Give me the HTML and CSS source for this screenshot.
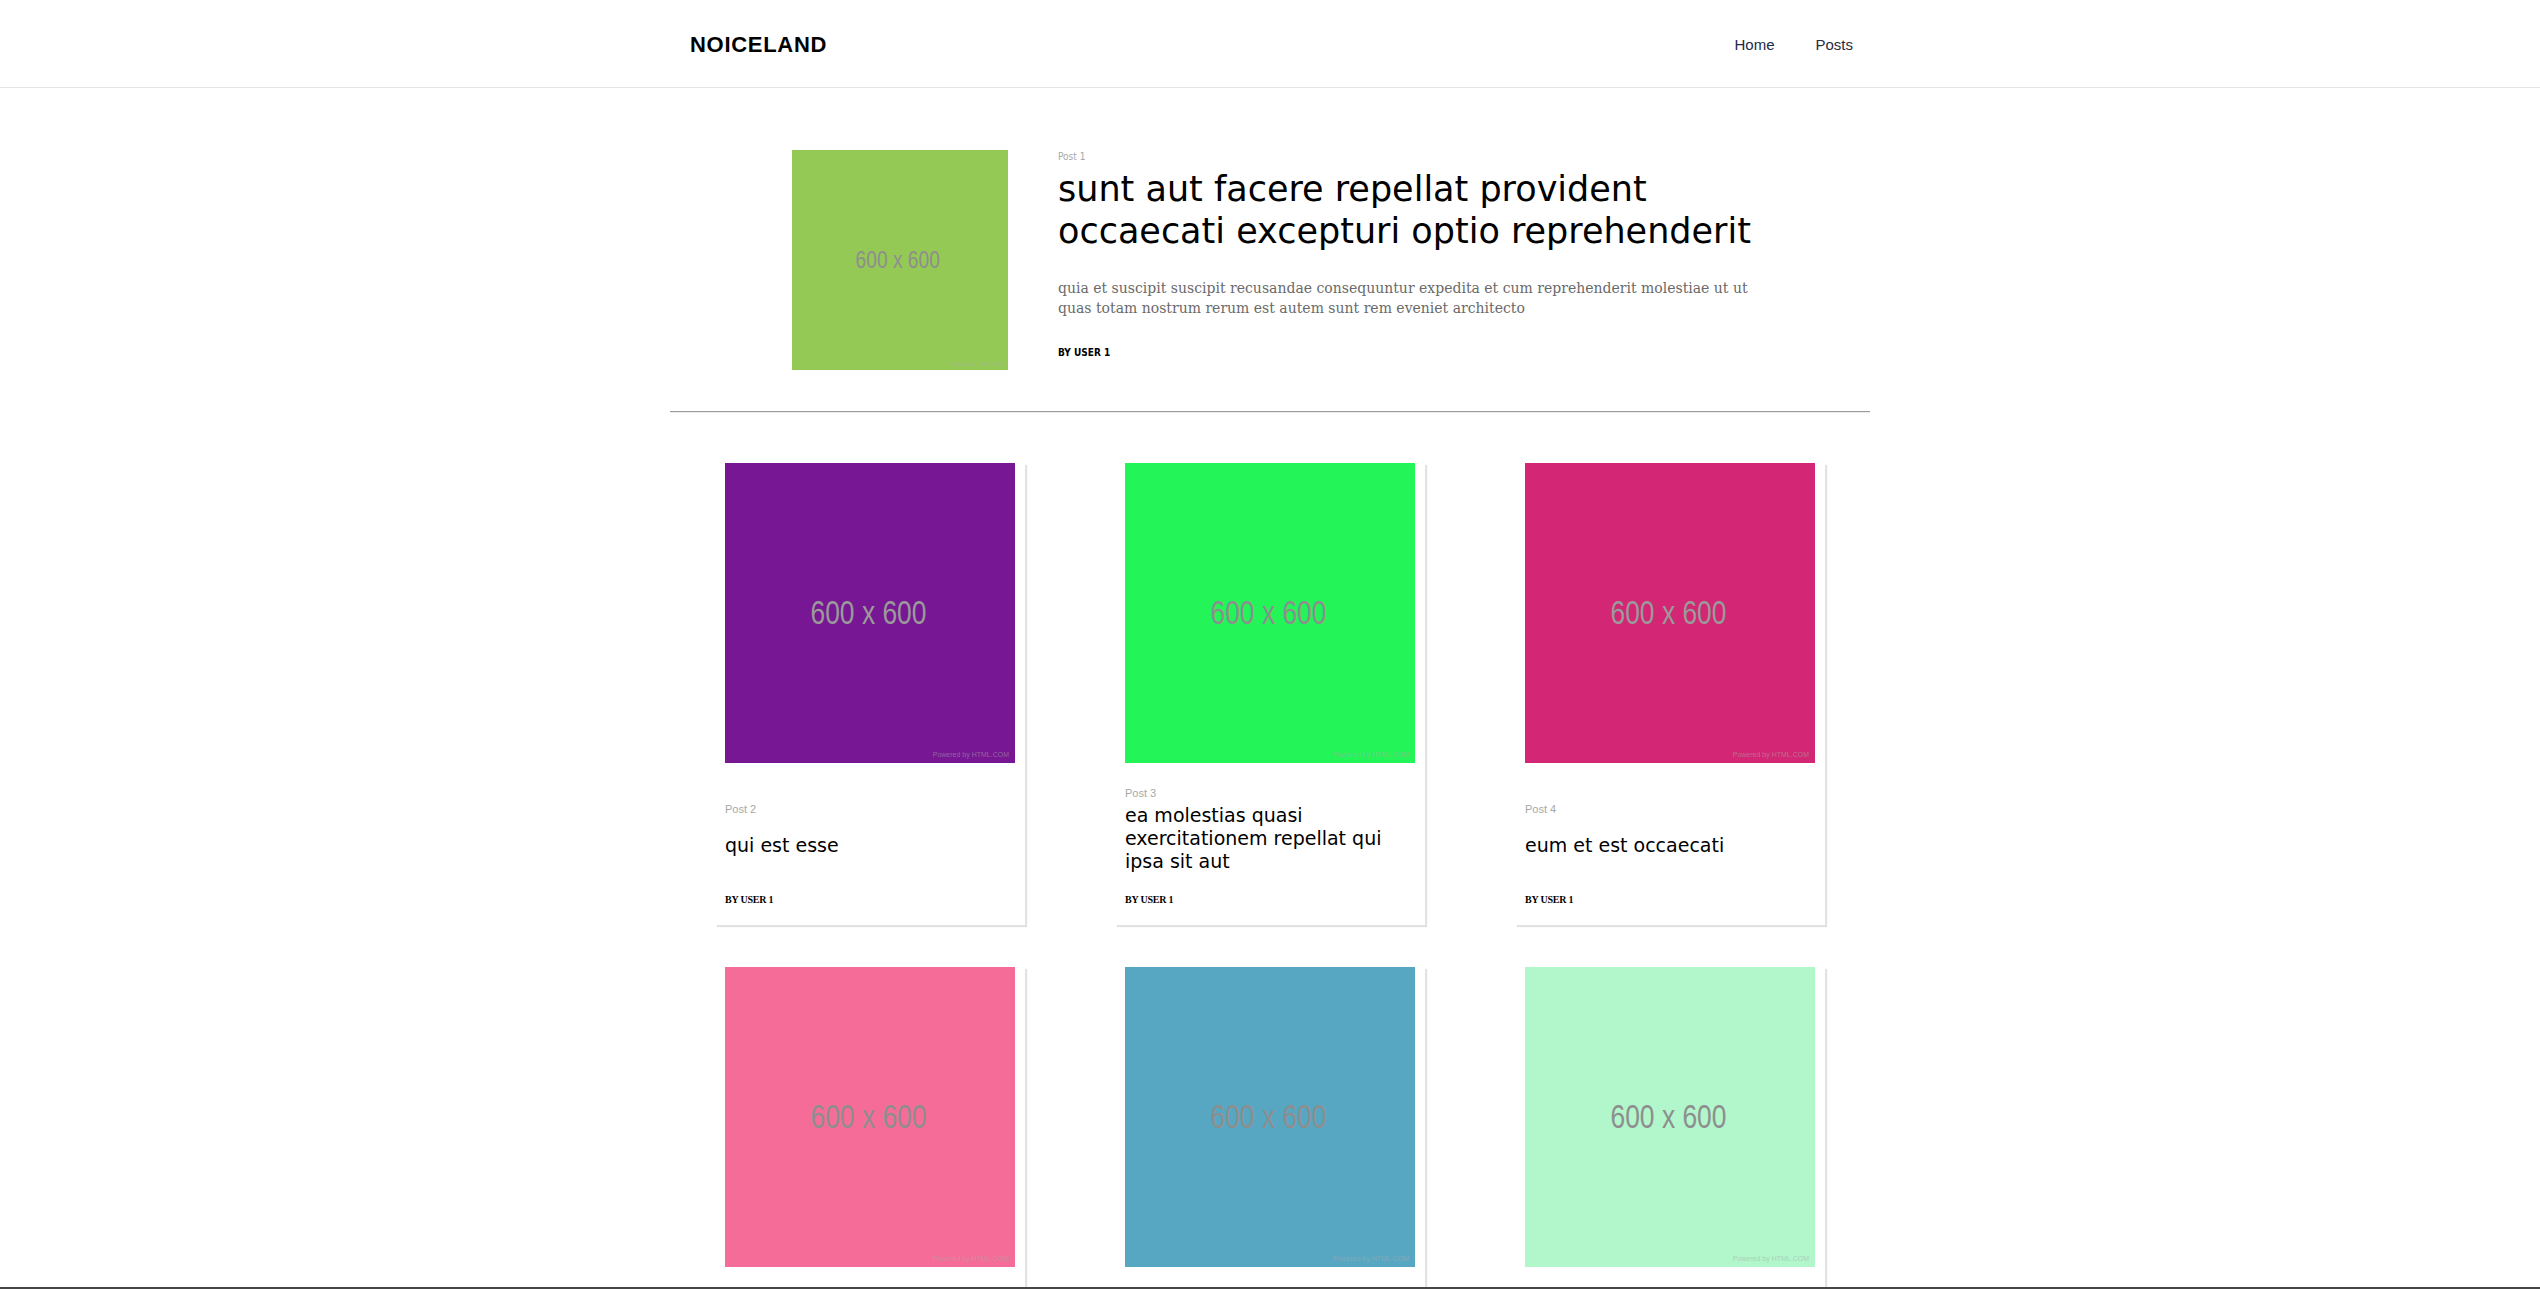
FILE: index.html
```html
<!DOCTYPE html>
<html lang="en">
<head>
<meta charset="utf-8">
<title>NOICELAND</title>
<link rel="stylesheet" href="styles.css">
</head>
<body>
<header class="site-header">
  <div class="header-inner">
    <div class="logo">NOICELAND</div>
    <nav class="nav">
      <a class="nav-link nav-home" href="#">Home</a>
      <a class="nav-link" href="#">Posts</a>
    </nav>
  </div>
</header>

<main class="container">
  <section class="featured">
    <div class="ph ph-featured ph-c1">
      <span class="ph-text">600 x 600</span>
      <span class="ph-credit">Powered by HTML.COM</span>
    </div>
    <div class="featured-text">
      <div class="f-label">Post 1</div>
      <h1 class="f-title">sunt aut facere repellat provident occaecati excepturi optio reprehenderit</h1>
      <p class="f-body">quia et suscipit suscipit recusandae consequuntur expedita et cum reprehenderit molestiae ut ut quas totam nostrum rerum est autem sunt rem eveniet architecto</p>
      <div class="f-by">BY USER 1</div>
    </div>
  </section>

  <hr class="divider">

  <section class="grid">
    <article class="card">
      <div class="ph ph-card ph-c2"><span class="ph-text">600 x 600</span><span class="ph-credit">Powered by HTML.COM</span></div>
      <div class="card-head">
        <div class="card-label">Post 2</div>
        <h2 class="card-title">qui est esse</h2>
      </div>
      <div class="card-by">BY USER 1</div>
    </article>
    <article class="card">
      <div class="ph ph-card ph-c3"><span class="ph-text">600 x 600</span><span class="ph-credit">Powered by HTML.COM</span></div>
      <div class="card-head">
        <div class="card-label">Post 3</div>
        <h2 class="card-title">ea molestias quasi exercitationem repellat qui ipsa sit aut</h2>
      </div>
      <div class="card-by">BY USER 1</div>
    </article>
    <article class="card">
      <div class="ph ph-card ph-c4"><span class="ph-text">600 x 600</span><span class="ph-credit">Powered by HTML.COM</span></div>
      <div class="card-head">
        <div class="card-label">Post 4</div>
        <h2 class="card-title">eum et est occaecati</h2>
      </div>
      <div class="card-by">BY USER 1</div>
    </article>
    <article class="card">
      <div class="ph ph-card ph-c5"><span class="ph-text">600 x 600</span><span class="ph-credit">Powered by HTML.COM</span></div>
      <div class="card-head">
        <div class="card-label">Post 5</div>
        <h2 class="card-title">nesciunt quas odio</h2>
      </div>
      <div class="card-by">BY USER 1</div>
    </article>
    <article class="card">
      <div class="ph ph-card ph-c6"><span class="ph-text">600 x 600</span><span class="ph-credit">Powered by HTML.COM</span></div>
      <div class="card-head">
        <div class="card-label">Post 6</div>
        <h2 class="card-title">dolorem eum magni eos aperiam quia</h2>
      </div>
      <div class="card-by">BY USER 1</div>
    </article>
    <article class="card">
      <div class="ph ph-card ph-c7"><span class="ph-text">600 x 600</span><span class="ph-credit">Powered by HTML.COM</span></div>
      <div class="card-head">
        <div class="card-label">Post 7</div>
        <h2 class="card-title">magnam facilis autem</h2>
      </div>
      <div class="card-by">BY USER 1</div>
    </article>
  </section>
</main>

<div class="bottom-bar"></div>
</body>
</html>
```

FILE: styles.css
```css
html, body {
  margin: 0;
  padding: 0;
  background: #ffffff;
}

body {
  font-family: "Liberation Sans", Arial, sans-serif;
  color: #000;
}

/* Header */
.site-header {
  border-bottom: 1px solid #e4e4e4;
}

.header-inner {
  max-width: 1200px;
  margin: 0 auto;
  height: 87px;
  padding: 2px 17px 0 20px;
  box-sizing: border-box;
  display: flex;
  align-items: center;
  justify-content: space-between;
}

.logo {
  font-family: "Liberation Sans", Arial, sans-serif;
  font-weight: 700;
  font-size: 22px;
  letter-spacing: 0.7px;
  color: #000;
}

.nav {
  display: flex;
  gap: 41px;
}

.nav-link {
  font-family: "Liberation Sans", Arial, sans-serif;
  font-size: 15px;
  color: #2a2a3e;
  text-decoration: none;
}

.nav-home {
  color: #1c2b48;
}

/* Main */
.container {
  max-width: 1200px;
  margin: 0 auto;
}

/* Placeholder images */
.ph {
  position: relative;
  display: flex;
  align-items: center;
  justify-content: center;
  overflow: hidden;
}

.ph-text {
  font-family: "Liberation Sans", Arial, sans-serif;
  color: #8e8e8e;
  transform: scaleX(0.8);
  white-space: nowrap;
  margin-right: 4px;
}

.ph-credit {
  position: absolute;
  right: 6px;
  bottom: 4px;
  font-family: "Liberation Sans", Arial, sans-serif;
  font-size: 7px;
  line-height: 8px;
  color: rgba(170, 170, 170, 0.55);
  white-space: nowrap;
}

.ph-c1 { background: #95c955; }
.ph-c2 { background: #771793; }
.ph-c3 { background: #23f457; }
.ph-c4 { background: #d32674; }
.ph-c5 { background: #f66c98; }
.ph-c6 { background: #57a7c3; }
.ph-c7 { background: #b1f7cb; }

.ph-c2 .ph-text,
.ph-c4 .ph-text {
  color: #9a9a9a;
}

/* Featured */
.featured {
  width: 960px;
  margin: 62px auto 0;
  padding-left: 2px;
  box-sizing: border-box;
  display: flex;
  align-items: flex-start;
  gap: 50px;
}

.ph-featured {
  flex: 0 0 216px;
  height: 220px;
}

.ph-featured .ph-text {
  font-size: 24px;
}

.ph-featured .ph-credit {
  font-size: 5px;
  line-height: 6px;
  right: 4px;
  bottom: 3px;
}

.featured-text {
  flex: 1;
  margin-right: -30px;
}

.f-label {
  font-family: "DejaVu Sans Condensed", "DejaVu Sans", sans-serif;
  font-stretch: condensed;
  font-size: 10px;
  line-height: 12px;
  margin-top: 1px;
  color: #a8a8a8;
}

.f-title {
  margin: 5px 0 0;
  font-family: "DejaVu Sans", Verdana, sans-serif;
  font-weight: 400;
  font-size: 35px;
  line-height: 42px;
  color: #000;
}

.f-body {
  margin: 26px 0 0;
  font-family: "DejaVu Serif", Georgia, serif;
  font-size: 14px;
  line-height: 20px;
  color: #6a6a6a;
}

.f-by {
  margin-top: 29px;
  font-family: "DejaVu Sans Condensed", "DejaVu Sans", sans-serif;
  font-stretch: condensed;
  font-weight: 700;
  font-size: 10px;
  line-height: 12px;
  color: #000;
}

/* Divider */
.divider {
  margin: 41px 0 0;
  height: 0;
  border: 0;
  border-top: 1px solid #9c9c9c;
  border-bottom: 1px solid #ececec;
}

/* Grid of cards */
.grid {
  display: grid;
  grid-template-columns: repeat(3, 1fr);
  row-gap: 42px;
  justify-items: center;
  margin-top: 50px;
  padding-bottom: 40px;
}

.card {
  width: 310px;
  padding: 0 10px;
  box-sizing: border-box;
  background: #fff;
  box-shadow: 2px 2px 1px #e2e2e2;
}

.ph-card {
  height: 300px;
}

.ph-card .ph-text {
  font-size: 33px;
}

.card-head {
  margin-top: 21px;
  height: 92px;
  display: flex;
  flex-direction: column;
  justify-content: space-evenly;
}

.card-label {
  font-family: "Liberation Sans", Arial, sans-serif;
  font-size: 11px;
  line-height: 13px;
  color: #a8a8a8;
}

.card-title {
  margin: 0;
  font-family: "DejaVu Sans", Verdana, sans-serif;
  font-weight: 400;
  font-size: 19px;
  line-height: 23px;
  color: #000;
}

.card-by {
  margin-top: 17px;
  padding-bottom: 19px;
  font-family: "Liberation Serif", "Times New Roman", serif;
  font-weight: 700;
  font-size: 10px;
  line-height: 13px;
  letter-spacing: -0.2px;
  color: #000;
}

/* Bottom strip overlaying the viewport edge */
.bottom-bar {
  position: fixed;
  left: 0;
  right: 0;
  bottom: 0;
  height: 2px;
  background: #454545;
}
```
